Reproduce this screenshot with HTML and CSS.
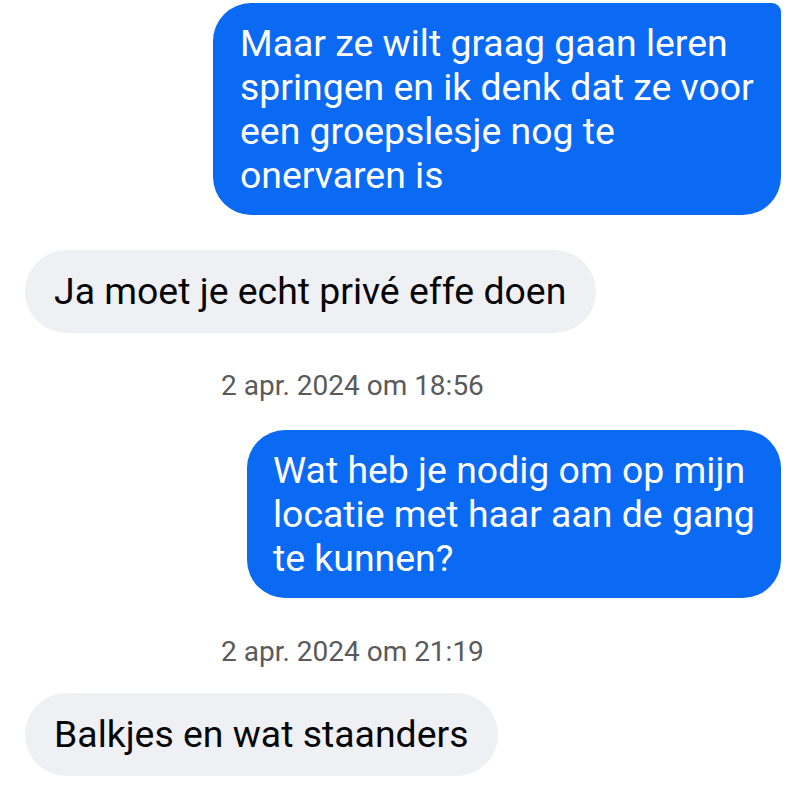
FILE: index.html
```html
<!DOCTYPE html>
<html lang="nl">
<head>
    <meta charset="UTF-8">
    <meta name="viewport" content="width=device-width, initial-scale=1.0">
    <title>Berichten</title>
    <link rel="stylesheet" href="styles.css">
</head>
<body>
    <div class="chat">
        <div class="msg msg-out first">
            Maar ze wilt graag gaan leren springen en ik denk dat ze voor een groepslesje nog te onervaren is
        </div>

        <div class="msg msg-in gap-1">Ja moet je echt privé effe doen</div>

        <div class="time gap-2">2 apr. 2024 om 18:56</div>

        <div class="msg msg-out narrow gap-3">
            Wat heb je nodig om op mijn locatie met haar aan de gang te kunnen?
        </div>

        <div class="time gap-4">2 apr. 2024 om 21:19</div>

        <div class="msg msg-in gap-5">Balkjes en wat staanders</div>
    </div>
</body>
</html>
```

FILE: styles.css
```css
:root {
    --blue: #0a6af4;
    --gray-bubble: #eff0f4;
    --time-color: #5a5a5c;
}

body {
    margin: 0;
    padding: 0;
    background-color: #fff;
    font-family: Roboto, "Liberation Sans", sans-serif;
}

.chat {
    display: flex;
    flex-direction: column;
    padding: 3px 19px 0 25px;
}

.msg {
    font-size: 37.4px;
    line-height: 44px;
    max-width: 514px;
    padding: 18px 27px;
    border-radius: 38px;
}

.msg-out {
    align-self: flex-end;
    background-color: var(--blue);
    color: #fff;
}

.msg-out.first {
    border-top-right-radius: 9px;
}

.msg-out.narrow {
    max-width: 484px;
    padding-left: 26px;
    padding-right: 24px;
}

.msg-in {
    align-self: flex-start;
    max-width: 600px;
    background-color: var(--gray-bubble);
    color: #050505;
    padding: 19px 30px 20px 29px;
    border-radius: 42px;
}

.time {
    font-size: 28px;
    line-height: 32px;
    color: var(--time-color);
    padding-left: 196px;
}

.gap-1 { margin-top: 35px; }
.gap-2 { margin-top: 37px; }
.gap-3 { margin-top: 28px; }
.gap-4 { margin-top: 38px; }
.gap-5 { margin-top: 25px; }
```
